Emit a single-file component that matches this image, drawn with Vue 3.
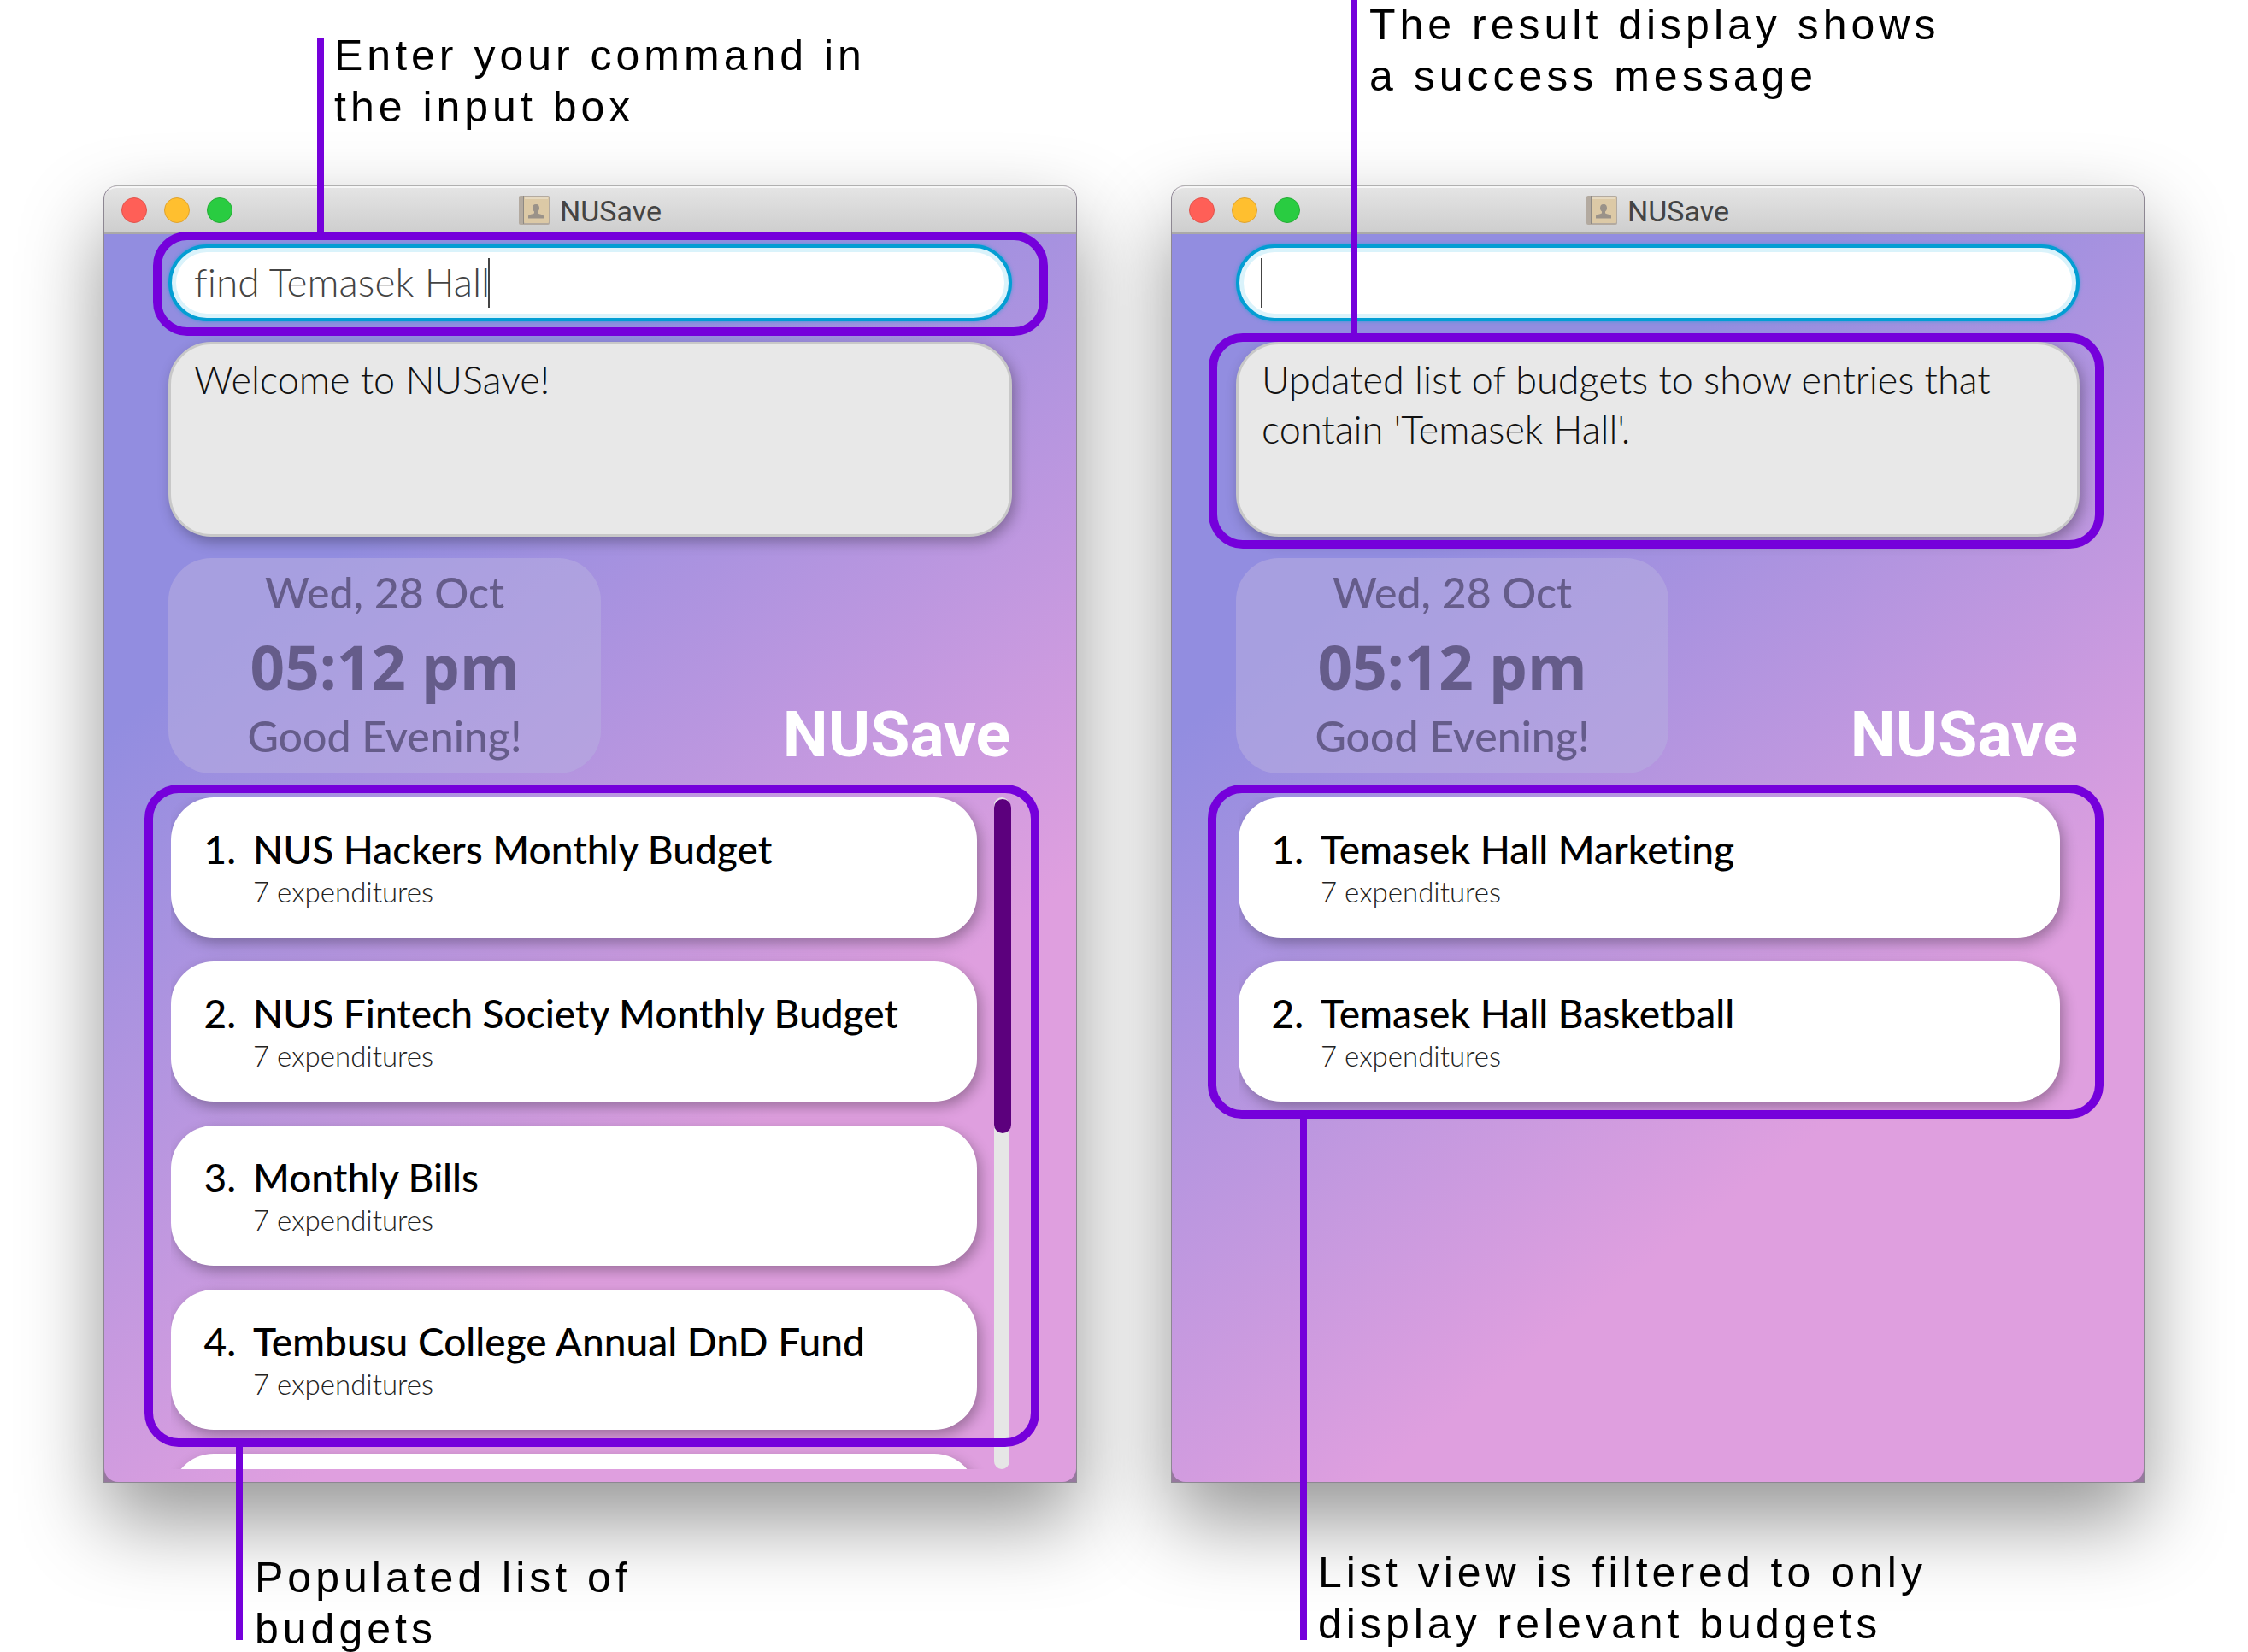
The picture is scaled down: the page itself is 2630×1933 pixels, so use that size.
<script setup>
const windows = [
  {
    id: 'before',
    command: 'find Temasek Hall',
    caret: 374,
    result: 'Welcome to NUSave!',
    budgets: [
      'NUS Hackers Monthly Budget',
      'NUS Fintech Society Monthly Budget',
      'Monthly Bills',
      'Tembusu College Annual DnD Fund',
      '',
    ],
    scrollable: true,
    notes: {
      command: ['Enter your command in', 'the input box'],
      list: ['Populated list of', 'budgets'],
    },
  },
  {
    id: 'after',
    command: '',
    caret: 29,
    result: "Updated list of budgets to show entries that contain 'Temasek Hall'.",
    budgets: ['Temasek Hall Marketing', 'Temasek Hall Basketball'],
    scrollable: false,
    notes: {
      result: ['The result display shows', 'a success message'],
      list: ['List view is filtered to only', 'display relevant budgets'],
    },
  },
]
</script>

<template>
  <main class="page">
    <section v-for="win in windows" :key="win.id" class="window" :class="win.id">
      <header class="titlebar">
        <div class="lights">
          <button class="light close" type="button" aria-label="Close"></button>
          <button class="light minimise" type="button" aria-label="Minimise"></button>
          <button class="light zoom" type="button" aria-label="Zoom"></button>
        </div>
        <svg class="app-icon" viewBox="0 0 36 34" aria-hidden="true">
          <rect x="0" y="0" width="36" height="34" rx="2" fill="#b3aaa0" />
          <rect x="6" y="1" width="29" height="31" rx="1" fill="#dcc9a6" />
          <rect x="7" y="2" width="27" height="2" fill="#e6d9c0" />
          <rect x="5" y="0" width="1" height="33" fill="#8f8a84" />
          <path d="M20 10c-3 0-4 2-4 4.500c0 2 1 3 2 4v2c-2 1-6 1.500-7 3v3h18v-3c-1-1.500-5-2-7-3v-2c1-1 2-2 2-4c0-2.500-1-4.500-4-4.500z" fill="#9a9289" />
        </svg>
        <h2 class="title">NUSave</h2>
      </header>

      <div class="body">
        <div class="region command-region">
          <input class="command" type="text" :value="win.command" aria-label="Command" />
          <span class="caret" :style="{ left: win.caret + 'px' }"></span>
          <div v-if="win.notes.command" class="highlight">
            <p class="callout above">
              <span class="note">{{ win.notes.command[0] }}<br />{{ win.notes.command[1] }}</span>
            </p>
          </div>
        </div>

        <div class="region result-region">
          <textarea class="result" readonly aria-label="Result" :value="win.result"></textarea>
          <div v-if="win.notes.result" class="highlight">
            <p class="callout above">
              <span class="note">{{ win.notes.result[0] }}<br />{{ win.notes.result[1] }}</span>
            </p>
          </div>
        </div>

        <div class="banner">
          <div class="clock">
            <p class="date">Wed, 28 Oct</p>
            <p class="time">05:12 pm</p>
            <p class="greeting">Good Evening!</p>
          </div>
          <h1 class="logo">NUSave</h1>
        </div>

        <div class="region list-region">
          <div class="scroller">
            <ol class="cards">
              <li v-for="(name, i) in win.budgets" :key="i" class="card">
                <template v-if="name">
                  <span class="number">{{ i + 1 }}.</span>
                  <div class="details">
                    <h3 class="name">{{ name }}</h3>
                    <p class="count">7 expenditures</p>
                  </div>
                </template>
              </li>
            </ol>
            <div v-if="win.scrollable" class="track"><div class="thumb"></div></div>
          </div>
          <div class="highlight">
            <p class="callout below">
              <span class="note">{{ win.notes.list[0] }}<br />{{ win.notes.list[1] }}</span>
            </p>
          </div>
        </div>
      </div>
    </section>
  </main>
</template>

<style>
body {
  background: #fff;
}
</style>

<style scoped>
* {
  box-sizing: border-box;
}
h1,
h2,
h3,
p,
ol {
  margin: 0;
  padding: 0;
  font-weight: 400;
}
.page {
  display: grid;
  grid-template-columns: 1fr 1fr;
  align-items: start;
  gap: 110px;
  min-height: 100vh;
  padding: 217px 121px 0;
  overflow: hidden;
  font-family: Lato, sans-serif;
  font-variant-ligatures: none;
}
.window {
  display: flex;
  flex-direction: column;
  border: 1px solid #8d8792;
  border-top-color: #b0b0b0;
  border-radius: 16px 16px 0 0;
  background: #97789f;
  box-shadow: 0 44px 96px rgba(0, 0, 0, 0.42);
}

/* Title bar */
.titlebar {
  position: relative;
  display: flex;
  align-items: center;
  justify-content: center;
  gap: 12px;
  height: 56px;
  border-top: 2px solid #f6f6f6;
  border-bottom: 2px solid #aaa9a8;
  border-radius: 15px 15px 0 0;
  background: linear-gradient(#e4e4e4, #cecece);
}
.lights {
  position: absolute;
  left: 20px;
  display: flex;
  gap: 20px;
}
.light {
  width: 30px;
  height: 30px;
  padding: 0;
  border: 1px solid;
  border-radius: 50%;
}
.close {
  border-color: #e2544d;
  background: #ff5f57;
}
.minimise {
  border-color: #e0a32e;
  background: #ffbf2f;
}
.zoom {
  border-color: #25ad35;
  background: #29cc41;
}
.app-icon {
  width: 36px;
  height: 34px;
}
.title {
  padding-top: 2px;
  color: #444;
  font: 400 34px/40px Roboto, sans-serif;
}

/* Window content */
.body {
  display: flex;
  flex-direction: column;
  padding: 12px 75px 15px;
  border-radius: 0 0 16px 16px;
  background: linear-gradient(142deg, #928de0 25%, #df9fdf 70%);
}
.region {
  position: relative;
  display: flex;
}
.command {
  flex: 1;
  width: 100%;
  height: 90px;
  padding: 0 26px 3px;
  border: 4px solid #039ed3;
  border-radius: 45px;
  outline: 0;
  background: #fff;
  box-shadow: inset 0 0 0 5px #daf3fb, 0 0 4px rgba(3, 158, 211, 0.6);
  color: #444;
  font: 300 46px/58px Lato, sans-serif;
  font-variant-ligatures: none;
}
.caret {
  position: absolute;
  top: 16px;
  width: 2px;
  height: 58px;
  background: #444;
}
.result-region {
  margin-top: 24px;
}
.result {
  flex: 1;
  width: 100%;
  height: 228px;
  padding: 12px 27px;
  border: 3px solid #c8c8c8;
  border-radius: 50px;
  outline: 0;
  background: #e8e8e8;
  box-shadow: 4px 6px 16px rgba(0, 0, 0, 0.3);
  color: #111;
  font: 300 45px/58px Lato, sans-serif;
  font-variant-ligatures: none;
  resize: none;
  overflow: hidden;
}
.banner {
  display: flex;
  align-items: flex-end;
  justify-content: space-between;
  margin: 25px 0 28px;
}
.clock {
  width: 506px;
  height: 252px;
  padding-top: 10px;
  border-radius: 50px;
  background: rgba(181, 171, 224, 0.6);
  color: #655c8a;
  text-align: center;
}
.date,
.greeting {
  font-size: 50px;
  font-weight: 500;
  line-height: 60px;
}
.time {
  padding-top: 6px;
  font: 700 71px/102px "Noto Sans", sans-serif;
}
.logo {
  padding: 0 2px 8px 0;
  color: #fff;
  font: 700 75px/76px Roboto, sans-serif;
}

/* Budget list */
.scroller {
  display: flex;
  flex: 1;
  gap: 20px;
  height: 786px;
  margin-left: 3px;
  overflow: hidden;
}
.cards {
  display: flex;
  flex: 1;
  flex-direction: column;
  gap: 28px;
  list-style: none;
}
.after .cards {
  padding-right: 23px;
}
.card {
  display: flex;
  flex: none;
  gap: 20px;
  height: 164px;
  padding: 34px 38px;
  border-radius: 50px;
  background: #fff;
  box-shadow: 4px 6px 16px rgba(0, 0, 0, 0.3);
}
.number,
.name {
  color: #000;
  font-size: 46px;
  font-weight: 500;
  line-height: 54px;
}
.number {
  width: 38px;
  text-align: right;
}
.count {
  margin-top: 4px;
  color: #222;
  font-size: 33px;
  font-weight: 300;
  line-height: 36px;
}
.track {
  width: 18px;
  height: 786px;
  margin-right: 3px;
  padding-top: 2px;
  border-radius: 9px;
  background: #e6e6e6;
}
.thumb {
  width: 20px;
  height: 391px;
  border-radius: 10px;
  background: #5c007d;
}

/* Annotations drawn over the windows */
.highlight {
  position: absolute;
  z-index: 2;
  border: 10px solid #7500db;
  border-radius: 40px;
  pointer-events: none;
}
.command-region .highlight {
  inset: -15px -42px -17px -18px;
}
.result-region .highlight {
  inset: -10px -28px -14px -32px;
}
.before .list-region .highlight {
  inset: -15px -32px 26px -28px;
}
.after .list-region .highlight {
  inset: -15px -28px 410px -33px;
}
.callout {
  position: absolute;
  display: flex;
  padding-left: 12px;
  border-left: 8px solid #7500db;
  color: #000;
  font: 50px/60px "Liberation Sans", Arial, sans-serif;
  letter-spacing: 5px;
  white-space: nowrap;
}
.above {
  bottom: 100%;
  margin-bottom: 10px;
}
.below {
  top: 100%;
  align-items: flex-end;
  margin-top: 10px;
}
.command-region .callout {
  left: 182px;
  height: 226px;
}
.command-region .note {
  margin-top: -10px;
}
.result-region .callout {
  left: 156px;
  height: 391px;
  padding-left: 14px;
}
.before .below {
  left: 97px;
  height: 226px;
  padding-left: 14px;
}
.before .below .note {
  margin-bottom: -17px;
}
.after .below {
  left: 98px;
  height: 610px;
  padding-left: 13px;
}
.after .below .note {
  margin-bottom: -11px;
}
</style>
